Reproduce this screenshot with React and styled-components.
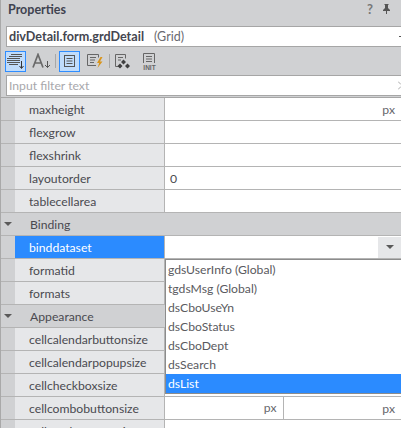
import styled, { createGlobalStyle } from "styled-components";

const Global = createGlobalStyle`
  html, body {
    margin: 0;
    padding: 0;
    background: #d0d1d3;
  }
`;

const Panel = styled.div`
  position: relative;
  width: 401px;
  height: 428px;
  overflow: hidden;
  background: #d0d1d3;
  border-left: 1px solid #a9a9a9;
  box-sizing: border-box;
  font-family: Lato, "Open Sans", sans-serif;
  font-size: 12.2px;
  color: #4a4a50;
`;

const TitleBar = styled.div`
  height: 26px;
  display: flex;
  align-items: center;
  justify-content: space-between;
  padding: 0 10px 8px 7px;
  box-sizing: border-box;
  font-weight: 700;
  font-size: 12.5px;
  color: #3f4350;
`;

const TitleIcons = styled.div`
  display: flex;
  align-items: center;
  gap: 9px;
  color: #777;
  font-size: 13px;
  font-weight: 700;
`;

const ObjectBox = styled.div`
  position: relative;
  height: 21px;
  margin-left: 5px;
  background: #fff;
  border-top: 1px solid #a6a6a6;
  border-bottom: 1px solid #a6a6a6;
  border-left: 1px solid #a6a6a6;
  display: flex;
  align-items: center;
  gap: 10px;
  padding-left: 2px;
  box-sizing: border-box;
  b {
    font-size: 12.6px;
    font-weight: 700;
    color: #444650;
  }
  span {
    color: #6a6a70;
    font-size: 12.5px;
  }
  &::after {
    content: "";
    position: absolute;
    right: 0;
    top: 9px;
    width: 2px;
    height: 1px;
    background: #555;
  }
`;

const Toolbar = styled.div`
  height: 28px;
  display: flex;
  align-items: center;
  padding-left: 4px;
  gap: 5px;
`;

const ToolButton = styled.div`
  width: 21px;
  height: 21px;
  display: flex;
  align-items: center;
  justify-content: center;
  box-sizing: border-box;
  border: 1px solid ${(p) => (p.$on ? "#2f8dff" : "transparent")};
  background: ${(p) => (p.$on ? "#c0dcfb" : "transparent")};
`;

const Divider = styled.div`
  width: 1px;
  height: 14px;
  background: #a8a8a8;
  margin: 0 -2px;
`;

const Filter = styled.div`
  height: 21px;
  margin-left: 5px;
  background: #fff;
  border-top: 1px solid #a6a6a6;
  border-bottom: 1px solid #a6a6a6;
  border-left: 1px solid #a6a6a6;
  display: flex;
  align-items: center;
  justify-content: space-between;
  padding-left: 2px;
  box-sizing: border-box;
  color: #a8a8ac;
`;

const Grid = styled.div`
  margin-top: 1px;
  border-top: 1px solid #a6a6a6;
`;

const Row = styled.div`
  display: grid;
  grid-template-columns: 14px 150px 1fr;
  height: 23px;
  box-sizing: border-box;
  border-bottom: 1px solid #b4b4b4;
`;

const Gutter = styled.div`
  background: #d0d1d3;
`;

const Name = styled.div`
  display: flex;
  align-items: center;
  padding-left: 14px;
  background: ${(p) => (p.$selected ? "#2b8bff" : "#e6e7e9")};
  color: ${(p) => (p.$selected ? "#fff" : "#4a4a50")};
  border-right: 1px solid #b4b4b4;
`;

const Value = styled.div`
  display: flex;
  align-items: center;
  background: #fff;
  min-width: 0;
`;

const ValueText = styled.span`
  padding-left: 5px;
`;

const Unit = styled.span`
  flex: 1;
  text-align: right;
  padding-right: 6px;
  color: #66666c;
  ${(p) => p.$split && "border-right: 1px solid #b4b4b4; height: 100%; line-height: 22px;"}
`;

const GroupRow = styled.div`
  height: 23px;
  display: flex;
  align-items: center;
  background: #d0d1d3;
  border-bottom: 1px solid #b4b4b4;
  box-sizing: border-box;
`;

const Arrow = styled.i`
  width: 0;
  height: 0;
  margin-left: ${(p) => (p.$inline ? "0" : "3px")};
  border-left: 4px solid transparent;
  border-right: 4px solid transparent;
  border-top: 4px solid #5a5a5a;
`;

const GroupLabel = styled.span`
  margin-left: 18px;
`;

const ComboButton = styled.div`
  margin-left: auto;
  width: 23px;
  height: 21px;
  background: #e6e7e9;
  display: flex;
  align-items: center;
  justify-content: center;
`;

const Dropdown = styled.ul`
  position: absolute;
  left: 164px;
  top: 259px;
  width: 236px;
  margin: 0;
  padding: 0;
  list-style: none;
  box-sizing: border-box;
  background: #fff;
  border: 1px solid #8c8c8c;
  border-right-width: 0;
`;

const Option = styled.li`
  height: 19px;
  line-height: 19px;
  padding-left: 2px;
  background: ${(p) => (p.$active ? "#2b8bff" : "transparent")};
  color: ${(p) => (p.$active ? "#fff" : "#5a5a60")};
`;

const SortIcon = () => (
  <svg width="19" height="17" viewBox="0 0 19 17" fill="none" stroke="#555">
    <path d="M5 1.500h11M3 3.500h13M1 5.500h13M1 7.500h13M1 9.500h13M3 11.500h9" />
    <path d="M15.500 8v7M13.500 13l2 2.500 2-2.500" stroke="#333" />
  </svg>
);

const AlphaIcon = () => (
  <svg width="19" height="16" viewBox="0 0 19 16" fill="none">
    <path d="M1 14.500L6 1.500l5 13M2.800 10h6.400" stroke="#6a6a6a" strokeWidth="1.700" />
    <path d="M15.500 8v6.500M13 12l2.500 2.500L18 12" stroke="#555" />
  </svg>
);

const ListIcon = () => (
  <svg width="15" height="15" viewBox="0 0 15 15" fill="none" stroke="#555">
    <rect x="2.500" y="1.500" width="10" height="11" />
    <path d="M4.500 4.500h6M4.500 7h6M4.500 9.500h6" />
  </svg>
);

const EventIcon = () => (
  <svg width="19" height="16" viewBox="0 0 19 16" fill="none">
    <path d="M10 12.500H1.500v-11h11v3M4 4.500h6M4 7h5M4 9.500h4" stroke="#666" />
    <path d="M14.500 4L11 10h2.200L11.500 15l5-6.500h-2.500L16.500 4z" fill="#d9941a" />
  </svg>
);

const MarkIcon = () => (
  <svg width="19" height="17" viewBox="0 0 19 17" fill="none">
    <path d="M5 13.500H1.500v-12h10v4M4 4.500h5M4 7h3" stroke="#666" />
    <path d="M9.500 6.500l2.500 2.500-2.500 2.500L7 9zM6 10.500l2.500 2.500L6 15.500 3.500 13zM13.500 10.500L16 13l-2.500 2.500L11 13z" fill="#3f3f3f" />
  </svg>
);

const InitIcon = () => (
  <svg width="19" height="19" viewBox="0 0 19 19" fill="none" stroke="#666">
    <path d="M3.500 11V1.500h11V11M6 4.500h6M6 7h6M6 9.500h6" />
    <text x="9.500" y="17.500" textAnchor="middle" fontSize="6.500" fontWeight="700" fill="#666" stroke="none" fontFamily="Liberation Sans, sans-serif">INIT</text>
  </svg>
);

const PinIcon = () => (
  <svg width="9" height="10" viewBox="0 0 9 10" fill="#555">
    <path d="M2.500 0h4v1H6v3l2 2v1H5v3H4V7H1V6l2-2V1h-.5z" />
  </svg>
);

const Chevron = () => (
  <svg width="3" height="9" viewBox="0 0 3 9" fill="none" stroke="#aaa">
    <path d="M0 .500L3 3.500M3 5.500L0 8.500" />
  </svg>
);

const topRows = [
  { name: "maxheight", unit: true },
  { name: "flexgrow" },
  { name: "flexshrink" },
  { name: "layoutorder", value: "0" },
  { name: "tablecellarea" },
];

const appearance = [
  "cellcalendarbuttonsize",
  "cellcalendarpopupsize",
  "cellcheckboxsize",
];

const options = [
  "gdsUserInfo (Global)",
  "tgdsMsg (Global)",
  "dsCboUseYn",
  "dsCboStatus",
  "dsCboDept",
  "dsSearch",
  "dsList",
];

const PropRow = ({ name, value, unit, selected, children }) => (
  <Row>
    <Gutter />
    <Name $selected={selected}>{name}</Name>
    <Value>
      {value && <ValueText>{value}</ValueText>}
      {unit && <Unit>px</Unit>}
      {children}
    </Value>
  </Row>
);

const Group = ({ label }) => (
  <GroupRow>
    <Arrow />
    <GroupLabel>{label}</GroupLabel>
  </GroupRow>
);

export default function App() {
  return (
    <Panel>
      <Global />
      <TitleBar>
        Properties
        <TitleIcons>
          <span>?</span>
          <PinIcon />
        </TitleIcons>
      </TitleBar>
      <ObjectBox>
        <b>divDetail.form.grdDetail</b>
        <span>(Grid)</span>
      </ObjectBox>
      <Toolbar>
        <ToolButton $on>
          <SortIcon />
        </ToolButton>
        <ToolButton>
          <AlphaIcon />
        </ToolButton>
        <Divider />
        <ToolButton $on>
          <ListIcon />
        </ToolButton>
        <ToolButton>
          <EventIcon />
        </ToolButton>
        <Divider />
        <ToolButton>
          <MarkIcon />
        </ToolButton>
        <ToolButton>
          <InitIcon />
        </ToolButton>
      </Toolbar>
      <Filter>
        Input filter text
        <Chevron />
      </Filter>
      <Grid>
        {topRows.map((r) => (
          <PropRow key={r.name} {...r} />
        ))}
        <Group label="Binding" />
        <PropRow name="binddataset" selected>
          <ComboButton>
            <Arrow $inline />
          </ComboButton>
        </PropRow>
        <PropRow name="formatid" />
        <PropRow name="formats" />
        <Group label="Appearance" />
        {appearance.map((n) => (
          <PropRow key={n} name={n} />
        ))}
        <PropRow name="cellcombobuttonsize">
          <Unit $split>px</Unit>
          <Unit>px</Unit>
        </PropRow>
        <PropRow name="cellcombopopupsize" />
      </Grid>
      <Dropdown>
        {options.map((o) => (
          <Option key={o} $active={o === "dsList"}>
            {o}
          </Option>
        ))}
      </Dropdown>
    </Panel>
  );
}
